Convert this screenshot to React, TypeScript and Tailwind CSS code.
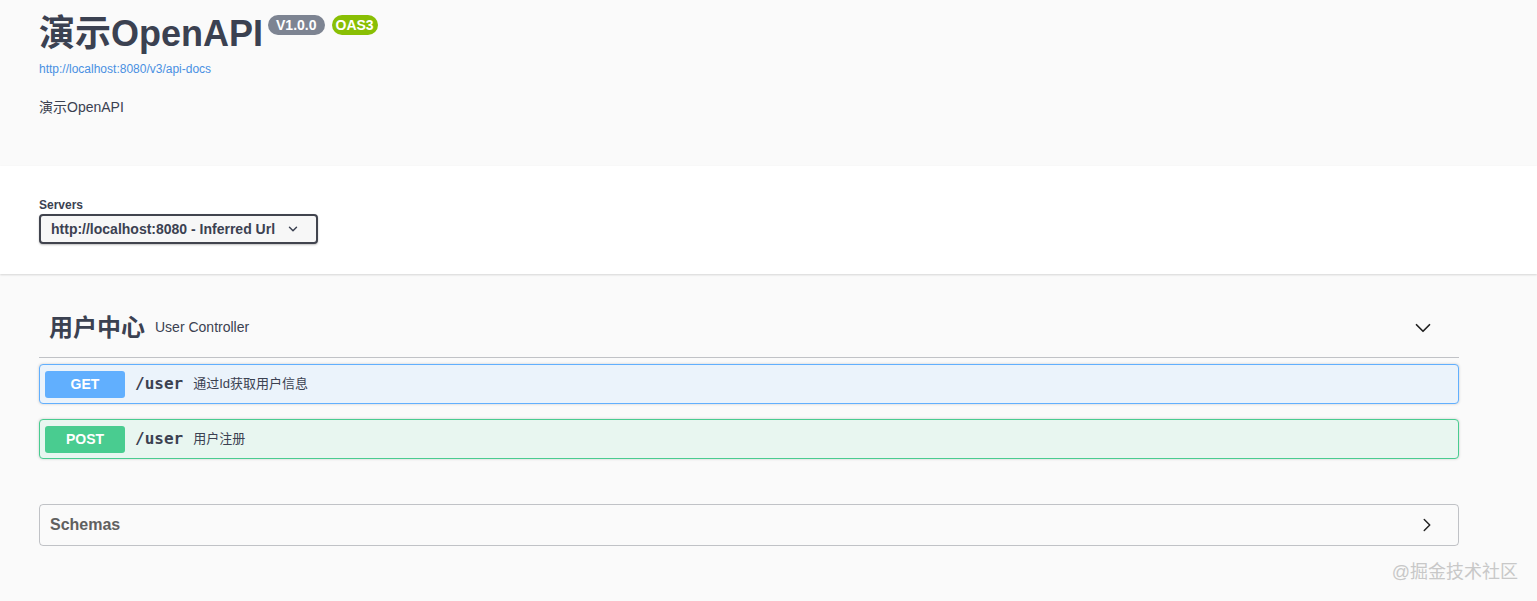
import { ChevronDown, ChevronRight } from 'lucide-react';

const sans = { fontFamily: '"Liberation Sans", "Noto Sans CJK SC", sans-serif' };

interface OpRowProps {
  method: string;
  path: string;
  summary: string;
  tone: 'get' | 'post';
}

const OpRow = ({ method, path, summary, tone }: OpRowProps) => {
  const isGet = tone === 'get';
  return (
    <div
      className={`flex items-center h-[40px] px-[5px] rounded-[4px] border mb-[15px] shadow-[0_0_3px_rgba(0,0,0,0.19)] ${
        isGet ? 'border-[#61affe] bg-[#ebf3fb]' : 'border-[#49cc90] bg-[#e8f6f0]'
      }`}
    >
      <span
        className={`w-[80px] h-[27px] flex items-center justify-center rounded-[3px] text-white font-bold text-[14px] ${
          isGet ? 'bg-[#61affe]' : 'bg-[#49cc90]'
        }`}
      >
        {method}
      </span>
      <span
        className="ml-[10px] text-[16px] font-bold text-[#3b4151]"
        style={{ fontFamily: '"DejaVu Sans Mono", monospace' }}
      >
        {path}
      </span>
      <span className="ml-[10px] text-[13px] text-[#3b4151]">{summary}</span>
    </div>
  );
};

export default function App() {
  return (
    <div className="relative min-h-[601px] bg-[#fafafa] text-[#3b4151]" style={sans}>
      {/* info */}
      <div className="h-[166px] pl-[39px] pt-[12px]">
        <div className="flex items-start">
          <h2 className="text-[36px] font-bold leading-[44px] text-[#3b4151]">演示OpenAPI</h2>
          <span className="ml-[5px] mt-[3px] px-[8px] h-[20px] flex items-center rounded-full bg-[#7d8492] text-white text-[14px] font-bold">
            V1.0.0
          </span>
          <span className="ml-[7px] mt-[3px] px-[4px] h-[20px] flex items-center rounded-full bg-[#89bf04] text-white text-[14px] font-bold">
            OAS3
          </span>
        </div>
        <a href="#" className="block mt-[5px] text-[12px] leading-[16px] text-[#4990e2]">
          http://localhost:8080/v3/api-docs
        </a>
        <p className="mt-[20px] text-[14px] leading-[20px]">演示OpenAPI</p>
      </div>

      {/* servers */}
      <div className="h-[108px] bg-white shadow-[0_1px_2px_rgba(0,0,0,0.15)] pl-[39px] pt-[32px]">
        <div className="text-[12px] font-bold leading-[14px]">Servers</div>
        <div className="mt-[2px] w-[279px] h-[30px] flex items-center justify-between pl-[10px] pr-[16px] rounded-[4px] border-2 border-[#41444e] bg-[#f7f7f7] shadow-[0_1px_2px_rgba(0,0,0,0.25)]">
          <span className="text-[14px] font-bold">http://localhost:8080 - Inferred Url</span>
          <ChevronDown size={14} strokeWidth={2.5} />
        </div>
      </div>

      {/* operations */}
      <div className="ml-[39px] w-[1420px] pt-[34px]">
        <div className="flex items-center h-[50px] pb-[10px] pl-[10px] pr-[23px] border-b border-[#3b4151]/30">
          <h3 className="text-[24px] font-bold">用户中心</h3>
          <span className="ml-[10px] text-[14px]">User Controller</span>
          <ChevronDown size={26} strokeWidth={1.6} className="ml-auto text-[#222]" />
        </div>
        <div className="mt-[6px]">
          <OpRow method="GET" path="/user" summary="通过Id获取用户信息" tone="get" />
          <OpRow method="POST" path="/user" summary="用户注册" tone="post" />
        </div>

        <div className="mt-[45px] h-[42px] flex items-center justify-between pl-[10px] pr-[20px] rounded-[4px] border border-[#3b4151]/30">
          <h4 className="text-[16px] font-bold text-[#606060]">Schemas</h4>
          <ChevronRight size={22} strokeWidth={1.6} className="text-[#222]" />
        </div>
      </div>

      <div className="absolute right-[19px] bottom-[15px] text-[18px] text-[#c8c8c8]">@掘金技术社区</div>
    </div>
  );
}
